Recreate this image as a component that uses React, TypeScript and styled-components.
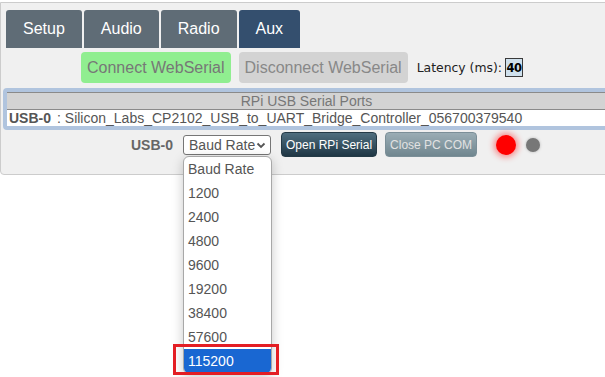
import React from "react";
import styled, { createGlobalStyle } from "styled-components";

const GlobalStyle = createGlobalStyle`
  html {
    overflow: hidden;
  }
  body {
    margin: 0;
    padding: 0;
    min-height: 100vh;
    background: #ffffff;
    font-family: "Liberation Sans", Arial, sans-serif;
  }
`;

const Page = styled.div`
  position: relative;
  padding-top: 2px;
`;

const Panel = styled.div`
  box-sizing: border-box;
  width: 614px;
  background: #f0f0f0;
  border: 1px solid #cccccc;
  border-radius: 0 0 4px 4px;
  padding: 7px 0 17px 0;
`;

const TabBar = styled.div`
  display: flex;
  gap: 2px;
  padding-left: 5px;
`;

const Tab = styled.div<{ $active?: boolean }>`
  height: 38px;
  padding: 0 17px;
  display: flex;
  align-items: center;
  justify-content: center;
  border-radius: 3px 3px 0 0;
  background: ${(p) => (p.$active ? "#344f6e" : "#5f6c76")};
  color: #ffffff;
  font-size: 16px;
`;

const ConnectRow = styled.div`
  display: flex;
  align-items: center;
  gap: 8px;
  margin-top: 4px;
  padding-left: 80px;
`;

const WebButton = styled.div<{ $tone: "green" | "gray" }>`
  height: 31px;
  padding: 0 6px;
  display: flex;
  align-items: center;
  border-radius: 4px;
  font-size: 16px;
  background: ${(p) => (p.$tone === "green" ? "#90ee90" : "#d3d3d3")};
  color: ${(p) => (p.$tone === "green" ? "#777777" : "#888888")};
`;

const LatencyGroup = styled.div`
  display: flex;
  align-items: center;
  gap: 3px;
  margin-left: 1px;
`;

const LatencyLabel = styled.span`
  font-family: "DejaVu Sans", Verdana, sans-serif;
  font-size: 12.4px;
  color: #222222;
`;

const LatencyInput = styled.div`
  box-sizing: border-box;
  width: 18px;
  height: 19px;
  border: 1px solid #3a3a3a;
  background: #cfe0ec;
  display: flex;
  align-items: center;
  justify-content: center;
  font-family: "DejaVu Sans", Verdana, sans-serif;
  font-weight: bold;
  font-size: 11.5px;
  color: #000000;
  letter-spacing: -0.5px;
`;

const PortsBox = styled.div`
  margin: 5px 3px 0 2px;
  border: 4px solid #b0c4de;
  border-radius: 4px;
`;

const PortsHeader = styled.div`
  height: 16px;
  line-height: 16px;
  background: #d3d3d3;
  border-top: 1px solid #8a8a8a;
  border-bottom: 1px solid #8a8a8a;
  text-align: center;
  font-size: 14px;
  color: #777777;
`;

const PortRow = styled.div`
  height: 16px;
  line-height: 16px;
  background: #ffffff;
  padding-left: 2px;
  font-size: 14px;
  color: #555555;
  white-space: nowrap;
`;

const PortName = styled.b`
  margin-right: 6px;
  color: #555555;
`;

const SerialRow = styled.div`
  display: flex;
  align-items: center;
  margin-top: 2px;
  padding-left: 130px;
`;

const PortLabel = styled.b`
  font-size: 14px;
  color: #666666;
  margin-right: 10px;
`;

const SelectWrap = styled.div`
  position: relative;
  margin-right: 10px;
`;

const SelectBox = styled.div`
  box-sizing: border-box;
  width: 88px;
  height: 20px;
  padding: 0 4px 0 5px;
  border: 1px solid #767676;
  border-radius: 3px;
  background: #ffffff;
  display: flex;
  align-items: center;
  justify-content: space-between;
  font-size: 14px;
  color: #555555;
`;

const Dropdown = styled.div`
  position: absolute;
  top: 21px;
  left: 0;
  box-sizing: border-box;
  width: 89px;
  border: 1px solid #a8a8a8;
  border-radius: 6px;
  background: #ffffff;
  box-shadow: 0 3px 12px rgba(0, 0, 0, 0.22);
  z-index: 5;
`;

const Option = styled.div<{ $selected?: boolean }>`
  position: relative;
  height: 24px;
  line-height: 24px;
  padding-left: 4px;
  font-size: 14px;
  color: ${(p) => (p.$selected ? "#ffffff" : "#555555")};
  background: ${(p) => (p.$selected ? "#1967d2" : "transparent")};
  border-radius: ${(p) => (p.$selected ? "0 0 5px 5px" : "0")};
`;

const Annotation = styled.div`
  position: absolute;
  left: -11px;
  right: -8px;
  top: -5px;
  bottom: -2px;
  border: 3px solid #e31e24;
  pointer-events: none;
`;

const SerialButton = styled.div<{ $variant: "open" | "close" }>`
  box-sizing: border-box;
  height: 25px;
  padding: 0 4px;
  display: flex;
  align-items: center;
  border-radius: 4px;
  font-size: 12px;
  margin-right: ${(p) => (p.$variant === "open" ? "8px" : "19px")};
  border: 1px solid ${(p) => (p.$variant === "open" ? "#243a46" : "#7b8f98")};
  background: ${(p) =>
    p.$variant === "open"
      ? "linear-gradient(#4f6e7f, #1f3644)"
      : "linear-gradient(#9aadb5, #70868f)"};
  color: ${(p) => (p.$variant === "open" ? "#ffffff" : "#e2e2e2")};
`;

const StatusDot = styled.div<{ $on?: boolean }>`
  width: ${(p) => (p.$on ? "20px" : "14px")};
  height: ${(p) => (p.$on ? "20px" : "14px")};
  border-radius: 50%;
  background: ${(p) => (p.$on ? "#ff0000" : "#777777")};
  box-shadow: ${(p) =>
    p.$on ? "0 0 6px 2px rgba(255, 0, 0, 0.45)" : "0 0 3px rgba(0,0,0,0.25)"};
  margin-right: ${(p) => (p.$on ? "10px" : "0")};
`;

const tabs = ["Setup", "Audio", "Radio", "Aux"];
const rates = ["Baud Rate", "1200", "2400", "4800", "9600", "19200", "38400", "57600", "115200"];

export default function App() {
  return (
    <>
      <GlobalStyle />
      <Page>
        <Panel>
          <TabBar>
            {tabs.map((t) => (
              <Tab key={t} $active={t === "Aux"}>
                {t}
              </Tab>
            ))}
          </TabBar>
          <ConnectRow>
            <WebButton $tone="green">Connect WebSerial</WebButton>
            <WebButton $tone="gray">Disconnect WebSerial</WebButton>
            <LatencyGroup>
              <LatencyLabel>Latency (ms):</LatencyLabel>
              <LatencyInput>40</LatencyInput>
            </LatencyGroup>
          </ConnectRow>
          <PortsBox>
            <PortsHeader>RPi USB Serial Ports</PortsHeader>
            <PortRow>
              <PortName>USB-0</PortName>: Silicon_Labs_CP2102_USB_to_UART_Bridge_Controller_056700379540
            </PortRow>
          </PortsBox>
          <SerialRow>
            <PortLabel>USB-0</PortLabel>
            <SelectWrap>
              <SelectBox>
                <span>Baud Rate</span>
                <svg width="10" height="8" viewBox="0 0 10 8">
                  <path d="M1.5 2.5 L5 6 L8.5 2.5" fill="none" stroke="#555" strokeWidth="1.8" />
                </svg>
              </SelectBox>
              <Dropdown>
                {rates.map((r) => (
                  <Option key={r} $selected={r === "115200"}>
                    {r}
                    {r === "115200" && <Annotation />}
                  </Option>
                ))}
              </Dropdown>
            </SelectWrap>
            <SerialButton $variant="open">Open RPi Serial</SerialButton>
            <SerialButton $variant="close">Close PC COM</SerialButton>
            <StatusDot $on />
            <StatusDot />
          </SerialRow>
        </Panel>
      </Page>
    </>
  );
}
